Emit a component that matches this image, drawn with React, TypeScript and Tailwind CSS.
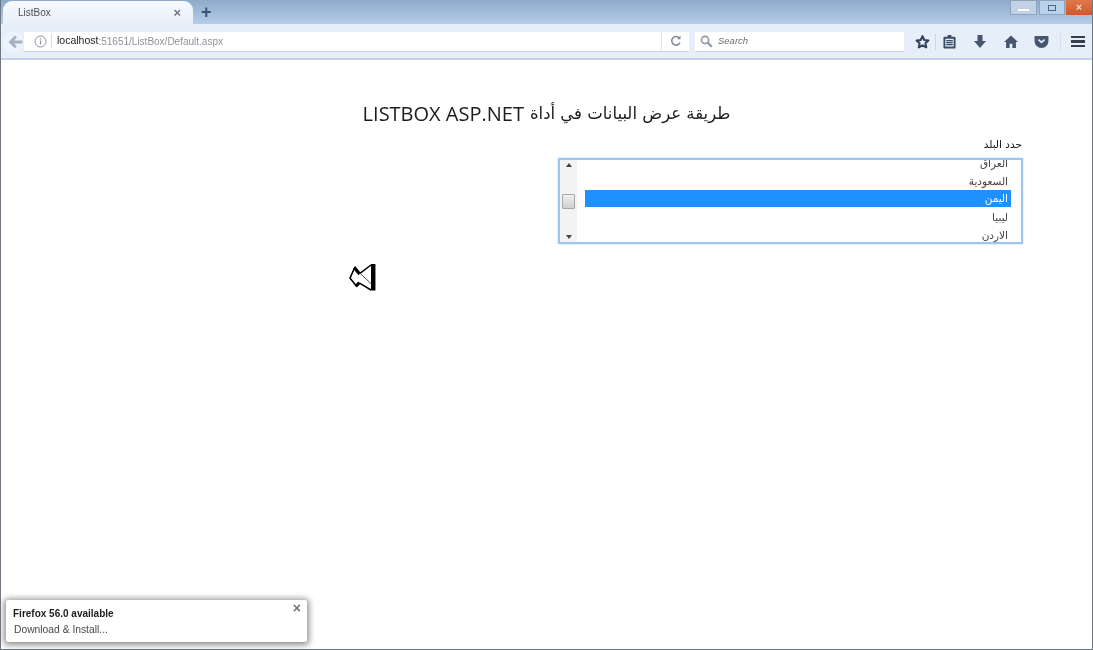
import React from "react";

const arabic = "font-['DejaVu_Sans','Noto_Sans',sans-serif]";

function Star() {
  return (
    <svg width="16" height="16" viewBox="0 0 16 16" fill="none" stroke="#33425a" strokeWidth="2.200" strokeLinejoin="round">
      <path d="M8 1.800l1.900 4 4.400.5-3.200 3 .9 4.400L8 11.500l-4 2.200.9-4.400-3.200-3 4.400-.5z" />
    </svg>
  );
}
function Clip() {
  return (
    <svg width="13" height="15" viewBox="0 0 14 16">
      <path d="M5 1h4v2h3.500a1 1 0 0 1 1 1v10.500a1 1 0 0 1-1 1h-11a1 1 0 0 1-1-1V4a1 1 0 0 1 1-1H5z" fill="#3a4a62" />
      <rect x="2.500" y="5" width="9" height="8.500" fill="#dfe8f5" />
      <path d="M3.500 7h7M3.500 9.200h7M3.500 11.400h7" stroke="#3a4a62" strokeWidth="1.400" />
    </svg>
  );
}
function Down() {
  return (
    <svg width="14" height="15" viewBox="0 0 14 15" fill="#46566e">
      <path d="M4.500 1h5v6H13l-6 7-6-7h3.500z" />
    </svg>
  );
}
function Home() {
  return (
    <svg width="14" height="13" viewBox="0 0 15 14" fill="#46566e">
      <path d="M7.500 .5L15 7.500h-2.200V14H9V9.500H6V14H2.200V7.500H0z" />
    </svg>
  );
}
function Pocket() {
  return (
    <svg width="15" height="13" viewBox="0 0 16 14">
      <path d="M1.500 1h13a1 1 0 0 1 1 1v4.500a7.500 7.500 0 0 1-15 0V2a1 1 0 0 1 1-1z" fill="#46566e" />
      <path d="M4.800 5l3.200 3 3.200-3" fill="none" stroke="#e6eefa" strokeWidth="1.800" />
    </svg>
  );
}
function Burger() {
  return (
    <div className="flex w-[14px] flex-col gap-[2px]">
      <div className="h-[2.500px] bg-[#34404f]" />
      <div className="h-[2.500px] bg-[#34404f]" />
      <div className="h-[2.500px] bg-[#34404f]" />
    </div>
  );
}
function Glass() {
  return (
    <svg width="13" height="13" viewBox="0 0 13 13" fill="none" stroke="#8d97a5" strokeWidth="1.600">
      <circle cx="5" cy="5" r="3.600" />
      <path d="M7.800 7.800l4 4" strokeWidth="2.200" />
    </svg>
  );
}
function Reload() {
  return (
    <svg width="12" height="12" viewBox="0 0 12 12" fill="none" stroke="#7c8694" strokeWidth="1.500">
      <path d="M10 7.500A4.300 4.300 0 1 1 9.300 3" />
      <path d="M10.500 .8v3.400H7.100z" fill="#7c8694" stroke="none" />
    </svg>
  );
}
function Back() {
  return (
    <svg width="15" height="14" viewBox="0 0 14 13" fill="#a4b1c4">
      <path d="M6.500 .5l1.800 1.700-2.700 2.800H13.500v2.800H5.600l2.700 2.800-1.800 1.700L.5 6.400z" />
    </svg>
  );
}
function Info() {
  return (
    <svg width="13" height="13" viewBox="0 0 13 13" fill="none">
      <circle cx="6.500" cy="6.500" r="5.500" stroke="#8a919c" />
      <path d="M6.500 5.500v4M6.500 3.200v1.200" stroke="#8a919c" strokeWidth="1.200" />
    </svg>
  );
}
function AudioIcon() {
  return (
    <svg width="27" height="28" viewBox="0 0 27 28">
      <path d="M24.200 0v26.500" stroke="#000" strokeWidth="4.500" />
      <path d="M22 1L11 9.300 6 3 1 14l6.700 8.500 3.300-3.200L22 26" fill="#fff" stroke="#000" strokeWidth="1.500" strokeLinejoin="round" />
      <path d="M6 3L1 14l6.700 8.500" fill="none" stroke="#000" strokeWidth="1" />
      <path d="M6 3l5 6.300-1.500 2L4.500 5zM7.700 22.500l3.300-3.200-1.700-1.800-3 3z" fill="#000" />
      <path d="M11 9.300L22 19.500" stroke="#555" strokeWidth="1" />
    </svg>
  );
}

export default function App() {
  return (
    <div className="flex h-[650px] w-[1093px] flex-col overflow-hidden border-x border-b border-[#6f7780] bg-white font-['Liberation_Sans',Arial,sans-serif] blur-[0.35px]">
      {/* title bar */}
      <div className="flex h-[24px] items-end bg-gradient-to-b from-[#8fa9ca] to-[#b5cdea]">
        <div className="ml-[2px] flex h-[23px] w-[190px] items-center justify-between rounded-t-[9px] bg-gradient-to-b from-[#f7f9fd] to-[#e9f0fa] pl-[15px] pr-[12px] text-[10px] text-[#4b4f55]">
          <span>ListBox</span>
          <span className="text-[13px] font-bold leading-none text-[#6d7680]">×</span>
        </div>
        <span className="ml-[8px] self-center text-[18px] font-bold leading-none text-[#3a5478]">+</span>
        <div className="ml-auto flex self-start">
          <div className="flex h-[15px] w-[27px] items-end justify-center border border-[#8fa3bc] bg-[#c2d1e4] pb-[3px]">
            <div className="h-[2px] w-[11px] bg-white" />
          </div>
          <div className="ml-[2px] flex h-[15px] w-[26px] items-center justify-center border border-[#8fa3bc] bg-[#b9d2ec]">
            <div className="h-[6px] w-[8px] border border-[#55657a]" />
          </div>
          <div className="ml-[1px] flex h-[15px] w-[26px] items-center justify-center bg-gradient-to-b from-[#dc7a4a] to-[#d4552d] text-[11px] font-bold leading-none text-[#f4d8cc]">
            ×
          </div>
        </div>
      </div>
      {/* toolbar */}
      <div className="flex h-[36px] items-center border-b-[2px] border-[#c3d2e6] bg-[#e6eefa] pl-[2px] pt-[1px]">
        <div className="flex h-[22px] w-[21px] items-center justify-center rounded-full bg-[#edf3fc] pl-[4px]">
          <Back />
        </div>
        <div className="flex h-[20px] w-[665px] items-center rounded-[1px] border-b border-[#c9d6e8] bg-white pl-[10px] text-[10px]">
          <Info />
          <div className="ml-[4px] h-[14px] w-px bg-[#d5dbe3]" />
          <span className="ml-[5px] text-[10.500px] text-[#1d1d1d]">localhost</span>
          <span className="text-[10px] text-[#8e939a]">:51651/ListBox/Default.aspx</span>
          <div className="ml-auto h-[20px] w-px bg-[#e3e8ef]" />
          <div className="flex w-[27px] justify-center">
            <Reload />
          </div>
        </div>
        <div className="ml-[6px] flex h-[20px] w-[209px] items-center gap-[5px] rounded-[1px] border-b border-[#c9d6e8] bg-white pl-[5px] text-[9.500px] italic text-[#6d7178]">
          <Glass />
          <span>Search</span>
        </div>
        <div className="ml-[11px] flex w-[15px] justify-center">
          <Star />
        </div>
        <div className="ml-[5px] h-[16px] w-px bg-[#cdd8e8]" />
        <div className="ml-[6px] flex w-[14px] justify-center">
          <Clip />
        </div>
        <div className="ml-[17px] flex w-[14px] justify-center">
          <Down />
        </div>
        <div className="ml-[16px] flex w-[15px] justify-center">
          <Home />
        </div>
        <div className="ml-[15px] flex w-[16px] justify-center">
          <Pocket />
        </div>
        <div className="ml-[11px] h-[18px] w-px bg-[#d5dfed]" />
        <div className="ml-[10px]">
          <Burger />
        </div>
      </div>
      {/* page */}
      <div className="relative flex flex-1 flex-col">
        <h1 className="mt-[41px] flex items-center justify-center gap-[6px] text-[#1c1c1c] font-normal" dir="ltr">
          <span className="font-['Open_Sans',sans-serif] text-[20px] leading-[26px]">LISTBOX ASP.NET</span>
          <span className={`text-[16.500px] leading-[26px] ${arabic}`} dir="rtl">
            طريقة عرض البيانات في أداة
          </span>
        </h1>
        <div className={`mt-[8px] pr-[70px] text-right text-[10.500px] leading-[18px] text-[#111] ${arabic}`}>
          حدد البلد
        </div>
        <div className="mt-[5px] ml-[557px] flex h-[86px] w-[465px] overflow-hidden border-[2px] border-[#9cc5f2] bg-white shadow-[0_0_2px_#bcd7f6]">
          <div className="flex w-[17px] flex-col items-center justify-between bg-[#f3f3f3] py-[3px]">
            <div className="h-0 w-0 border-x-[3px] border-b-[4px] border-x-transparent border-b-[#444]" />
            <div className="h-[15px] w-[13px] rounded-[1px] border border-[#a8a8a8] bg-gradient-to-b from-[#f0f0f0] to-[#cfcfcf]" />
            <div className="h-0 w-0 border-x-[3px] border-t-[4px] border-x-transparent border-t-[#444]" />
          </div>
          <div className={`ml-[8px] -mt-[6px] mr-[10px] flex-1 text-right text-[10.500px] leading-[18px] text-[#444] ${arabic}`}>
            <div className="pr-[3px]">العراق</div>
            <div className="pr-[3px]">السعودية</div>
            <div className="bg-[#1e90ff] pr-[3px] leading-[17px] text-white">اليمن</div>
            <div className="pr-[3px] pt-px">ليبيا</div>
            <div className="pr-[3px]">الاردن</div>
          </div>
        </div>
        <div className="mt-[20px] ml-[348px]">
          <AudioIcon />
        </div>
        {/* update popup */}
        <div className="absolute bottom-[7px] left-[5px] flex h-[42px] w-[301px] flex-col justify-between rounded-[2px] bg-white px-[7px] pb-[5px] pt-[6px] text-[10px] shadow-[0_1px_6px_2px_rgba(0,0,0,0.45)]">
          <div className="font-bold text-[#1d1d1d]">Firefox 56.0 available</div>
          <div className="ml-px text-[10.300px] text-[#4a4a4a]">Download &amp; Install...</div>
          <span className="absolute right-[6px] top-[1px] text-[14px] font-bold leading-none text-[#777]">×</span>
        </div>
      </div>
    </div>
  );
}
